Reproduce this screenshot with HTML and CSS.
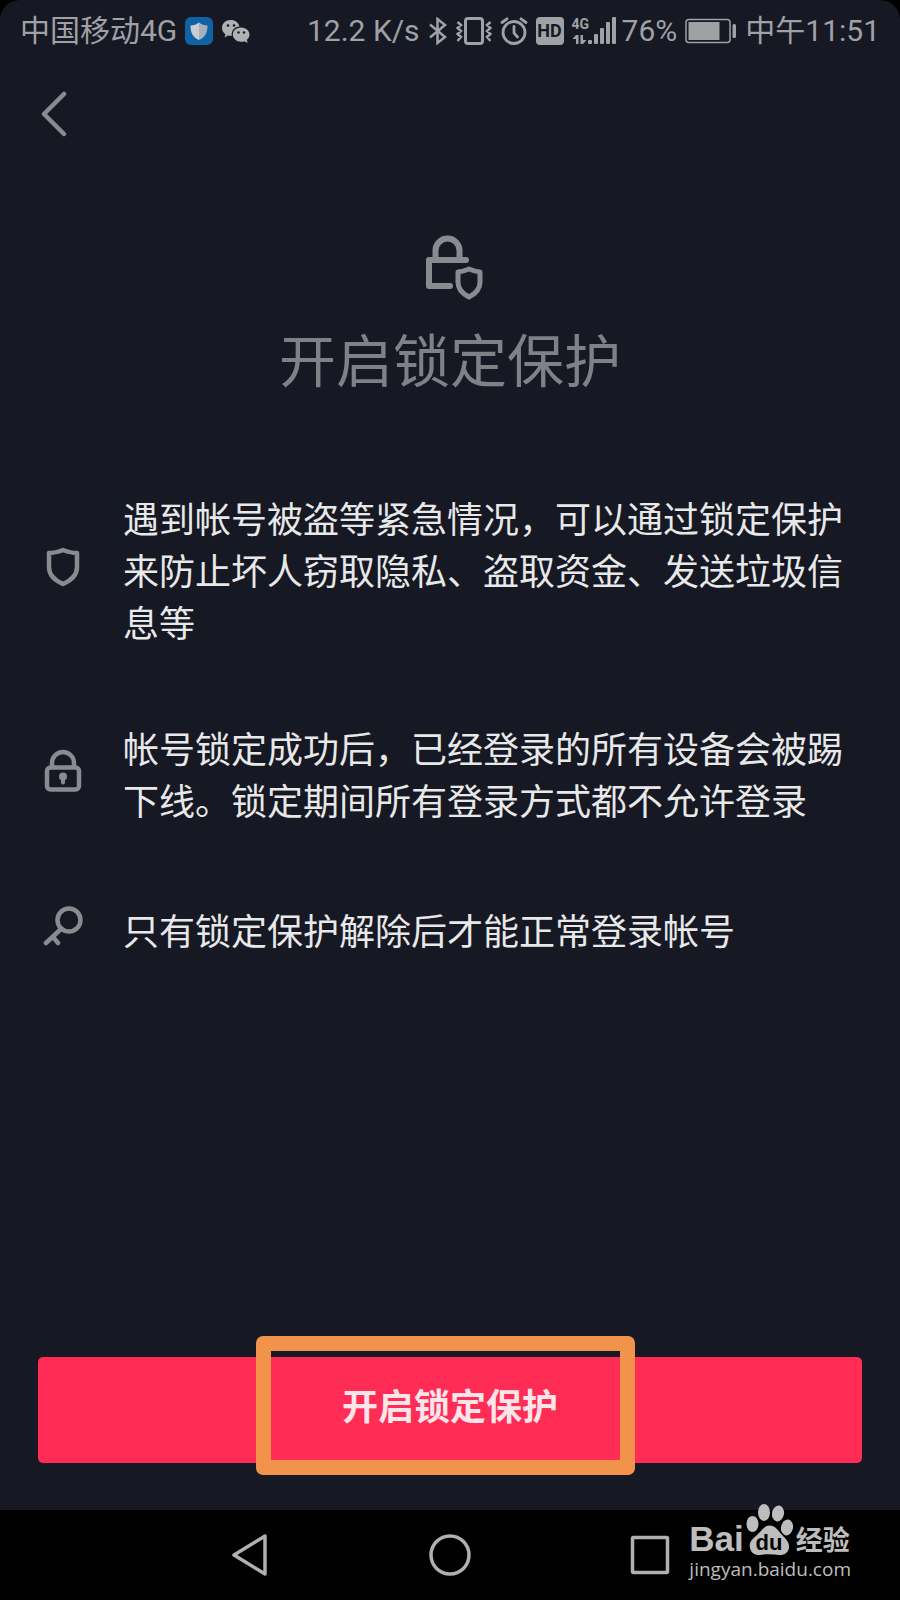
FILE: index.html
```html
<!DOCTYPE html>
<html lang="zh-CN">
<head>
    <meta charset="UTF-8">
    <meta name="viewport" content="width=device-width, initial-scale=1.0">
    <title>开启锁定保护</title>
    <link rel="stylesheet" href="styles.css">
</head>
<body>

    <div class="screen">
        <!-- Status bar -->
        <div class="status-bar">
            <div class="status-left">
                <span>中国移动4G</span>
                <svg width="28" height="28" viewBox="0 0 28 28">
                    <rect width="28" height="28" rx="6" fill="#0f62a3"/>
                    <path d="M14 5.500C11.500 7.500 9 8.200 5.500 8.500C5.500 16 8 20.500 14 23Z" fill="#c8cdd2"/>
                    <path d="M14 5.500C16.500 7.500 19 8.200 22.500 8.500C22.500 16 20 20.500 14 23Z" fill="#a5b0bb"/>
                </svg>
                <svg width="30" height="28" viewBox="0 0 30 28">
                    <path d="M10 3C4.500 3 1 6.500 1 11C1 13.600 2.300 15.800 4.500 17.200L3.500 20.500L7.200 18.600C8.500 19 9.500 19 10.700 19C10 13.500 14 9.500 18.500 9.500C17.500 5.500 14 3 10 3Z" fill="#b0b1b4"/>
                    <path d="M20 10.500C15.500 10.500 11.800 13.600 11.800 17.600C11.800 21.600 15.500 24.800 20 24.800C21.200 24.800 22.300 24.600 23.400 24.200L26.700 26L25.800 22.800C27.500 21.500 28.500 19.700 28.500 17.600C28.500 13.600 24.600 10.500 20 10.500Z" fill="#b0b1b4"/>
                    <g fill="#161823">
                        <circle cx="7" cy="8.500" r="1.300"/>
                        <circle cx="13" cy="8.500" r="1.300"/>
                        <circle cx="17.500" cy="15.500" r="1.200"/>
                        <circle cx="23" cy="15.500" r="1.200"/>
                    </g>
                </svg>
            </div>
            <div class="status-right">
                <span>12.2 K/s</span>
                <!-- bluetooth -->
                <svg width="20" height="28" viewBox="0 0 20 28" fill="none" stroke="#a0a1a5" stroke-width="2.500">
                    <path d="M2 7.500L17 20L9.500 26V2L17 8L2 20.500"/>
                </svg>
                <!-- vibrate -->
                <svg width="36" height="28" viewBox="0 0 36 28" fill="none" stroke="#a0a1a5" stroke-width="2.500">
                    <rect x="9.500" y="1.500" width="17" height="25" rx="2.500" stroke-width="3"/>
                    <path d="M1.500 5L5 8L1.500 11L5 14L1.500 17L5 20L1.500 24M34.500 5L31 8L34.500 11L31 14L34.500 17L31 20L34.500 24"/>
                </svg>
                <!-- alarm -->
                <svg width="28" height="28" viewBox="0 0 28 28" fill="none" stroke="#a0a1a5" stroke-width="2.800" stroke-linecap="round">
                    <circle cx="14" cy="15.500" r="11"/>
                    <path d="M14 9.500V16L17.500 20M2 5.500L7 1.800M26 5.500L21 1.800"/>
                </svg>
                <span class="hd">HD</span>
                <span class="network">
                    <span class="network-type">4G</span>
                    <svg width="46" height="28" viewBox="0 0 46 28" fill="#a0a1a5">
                        <path d="M4 18H6.500V27H4V22H0.500ZM8.500 18H11V23H14.500L11 27H8.500Z"/>
                        <rect x="16" y="23" width="4" height="4" rx="1"/>
                        <rect x="22" y="17" width="4" height="10" rx="1"/>
                        <rect x="28" y="11" width="4" height="16" rx="1"/>
                        <rect x="34" y="5" width="4" height="22" rx="1"/>
                        <rect x="40" y="0" width="4" height="27" rx="1"/>
                    </svg>
                </span>
                <span>76%</span>
                <!-- battery -->
                <svg width="52" height="26" viewBox="0 0 52 26">
                    <rect x="1" y="1.500" width="44" height="23" rx="3" fill="none" stroke="#a0a1a5" stroke-width="1.500"/>
                    <rect x="3.500" y="4" width="31" height="18" fill="#a0a1a5"/>
                    <rect x="47.500" y="6" width="3.500" height="14" rx="1.500" fill="#a0a1a5"/>
                </svg>
                <span>中午11:51</span>
            </div>
        </div>

        <header class="top-bar">
            <button class="back" type="button" aria-label="返回">
                <svg width="26" height="46" viewBox="0 0 26 46" fill="none" stroke="#8a8b91" stroke-width="4.500" stroke-linecap="round" stroke-linejoin="round">
                    <path d="M23 3L3 23L23 43"/>
                </svg>
            </button>
        </header>

        <main class="content">
            <div class="hero">
                <svg width="58" height="66" viewBox="0 0 58 66" fill="none" stroke="#8a8b91" stroke-width="6" stroke-linecap="round" stroke-linejoin="round">
                    <path d="M10.500 24V15.500A12 12 0 0 1 34.500 15.500V24"/>
                    <path d="M41 25H4V51H25"/>
                    <path d="M44 34Q38 36.500 33 37V47Q33 56.500 44 62Q55 56.500 55 47V37Q50 36.500 44 34Z" stroke-width="5"/>
                </svg>
                <h1>开启锁定保护</h1>
            </div>

            <ul class="notes">
                <li>
                    <svg width="40" height="44" viewBox="0 0 40 44" fill="none" stroke="#8a8b91" stroke-width="4.500" stroke-linejoin="round">
                        <path d="M20 5Q12 8 6 8V22Q6 33 20 39Q34 33 34 22V8Q28 8 20 5Z"/>
                    </svg>
                    <p>遇到帐号被盗等紧急情况，可以通过锁定保护来防止坏人窃取隐私、盗取资金、发送垃圾信息等</p>
                </li>
                <li>
                    <svg width="40" height="44" viewBox="0 0 40 44" fill="none" stroke="#8a8b91" stroke-width="4.500">
                        <path d="M9 18V14A11 11 0 0 1 31 14V18"/>
                        <rect x="4" y="18.500" width="32" height="22" rx="3.500"/>
                        <circle cx="20" cy="27.500" r="4" fill="#8a8b91" stroke="none"/>
                        <path d="M20 28V33.500" stroke-width="4" stroke-linecap="round"/>
                    </svg>
                    <p>帐号锁定成功后，已经登录的所有设备会被踢下线。锁定期间所有登录方式都不允许登录</p>
                </li>
                <li>
                    <svg width="40" height="44" viewBox="0 0 40 44" fill="none" stroke="#8a8b91" stroke-width="4.500" stroke-linecap="round">
                        <circle cx="26" cy="15" r="11.500"/>
                        <path d="M18 24L3 38M10 32L15 38"/>
                    </svg>
                    <p>只有锁定保护解除后才能正常登录帐号</p>
                </li>
            </ul>
        </main>

        <div class="action">
            <button class="primary" type="button">开启锁定保护</button>
            <div class="highlight"></div>
        </div>
    </div>

    <!-- System navigation -->
    <nav class="nav-bar">
        <button type="button" aria-label="返回">
            <svg width="42" height="44" viewBox="0 0 42 44" fill="none" stroke="#b0b0b0" stroke-width="3.500" stroke-linejoin="round">
                <path d="M36 3V41L5 22Z"/>
            </svg>
        </button>
        <button type="button" aria-label="主屏幕">
            <svg width="44" height="44" viewBox="0 0 44 44" fill="none" stroke="#b0b0b0" stroke-width="3.500">
                <circle cx="22" cy="22" r="19"/>
            </svg>
        </button>
        <button type="button" aria-label="最近任务">
            <svg width="44" height="44" viewBox="0 0 44 44" fill="none" stroke="#b0b0b0" stroke-width="3.500" stroke-linejoin="round">
                <rect x="4.500" y="4.500" width="35" height="35" rx="1"/>
            </svg>
        </button>

        <div class="watermark">
            <div class="brand">
                <span class="brand-bai">Bai</span>
                <svg width="48" height="52" viewBox="0 0 48 52" fill="#bdbdbd">
                    <ellipse cx="6.500" cy="20" rx="6" ry="8"/>
                    <ellipse cx="18" cy="8.500" rx="6" ry="8.500"/>
                    <ellipse cx="32" cy="9.500" rx="6" ry="8" transform="rotate(10 32 9.500)"/>
                    <ellipse cx="41" cy="23.500" rx="6" ry="8" transform="rotate(10 41 23.500)"/>
                    <path d="M23.500 21.500C18 21.500 16 27 11 31C5 36 3 39 4 44C5 49 9 51.500 14 51C19 50 27 50 33 51C38 51.500 42 49 43 44C43.500 39 41 36 37 32C32 27 30 21.500 23.500 21.500Z"/>
                    <text class="brand-du" x="23" y="46" text-anchor="middle">du</text>
                </svg>
                <span class="brand-cn">经验</span>
            </div>
            <div class="site">jingyan.baidu.com</div>
        </div>
    </nav>

</body>
</html>
```
FILE: styles.css
```css
* {
    box-sizing: border-box;
}
body {
    margin: 0;
    min-height: 100vh;
    display: flex;
    flex-direction: column;
    background: #000;
    color: #e8e8e9;
    font-family: Roboto, "Noto Sans CJK SC", sans-serif;
}
button {
    padding: 0;
    border: 0;
    background: none;
    font-family: inherit;
}
svg {
    display: block;
    flex: none;
}
.screen {
    flex: 1;
    display: flex;
    flex-direction: column;
    background: #161823;
    border-radius: 20px 20px 0 0;
}

/* status bar */
.status-bar {
    display: flex;
    justify-content: space-between;
    align-items: center;
    height: 62px;
    padding: 0 20px;
    color: #a0a1a5;
    font-size: 30px;
    line-height: 36px;
    white-space: nowrap;
}
.status-left,
.status-right {
    display: flex;
    align-items: center;
    gap: 8px;
}
.hd {
    width: 28px;
    height: 28px;
    border-radius: 4px;
    background: #a0a1a5;
    color: #161823;
    font-size: 18px;
    font-weight: bold;
    line-height: 28px;
    text-align: center;
}
.network {
    position: relative;
    margin-right: -4px;
}
.network-type {
    position: absolute;
    top: 0;
    left: 0;
    font-size: 14px;
    font-weight: bold;
    line-height: 14px;
}

/* page */
.top-bar {
    display: flex;
    align-items: center;
    height: 104px;
    padding: 0 41px;
}
.hero {
    display: flex;
    flex-direction: column;
    align-items: center;
    padding-top: 69px;
}
.hero svg {
    margin-left: 8px;
}
h1 {
    margin: 22px 0 0;
    color: #808187;
    font-size: 57px;
    font-weight: normal;
    line-height: 80px;
}
.notes {
    display: flex;
    flex-direction: column;
    gap: 74px;
    margin: 92px 0 0;
    padding: 0 50px 0 43px;
    list-style: none;
}
.notes li {
    display: flex;
    align-items: center;
    gap: 40px;
    min-height: 60px;
}
.notes li svg {
    margin-bottom: 12px;
}
.notes p {
    margin: 0;
    font-size: 36px;
    line-height: 52px;
}
.action {
    position: relative;
    margin: auto 38px 47px;
}
.primary {
    display: block;
    width: 100%;
    height: 106px;
    padding-bottom: 12px;
    border-radius: 5px;
    background: #ff2c55;
    color: #ffe5ea;
    font-size: 36px;
    font-weight: bold;
}
.highlight {
    position: absolute;
    top: -21px;
    right: 227px;
    bottom: -12px;
    left: 218px;
    border: 15px solid #f2934b;
    border-radius: 7px;
    pointer-events: none;
}

/* bottom navigation */
.nav-bar {
    position: relative;
    display: flex;
    height: 90px;
    padding: 0 150px;
}
.nav-bar button {
    flex: 1;
    display: flex;
    justify-content: center;
    align-items: center;
}
.watermark {
    position: absolute;
    right: 49px;
    bottom: 18px;
    color: #bdbdbd;
}
.brand {
    display: flex;
    align-items: flex-end;
    gap: 2px;
}
.brand-bai {
    font-family: "Liberation Sans", sans-serif;
    font-size: 35px;
    font-weight: bold;
    line-height: 34px;
}
.brand-du {
    fill: #000;
    font-family: "Liberation Sans", sans-serif;
    font-size: 22px;
    font-weight: bold;
}
.brand-cn {
    font-size: 27px;
    font-weight: bold;
    line-height: 30px;
}
.site {
    font-family: "Open Sans", sans-serif;
    font-size: 19px;
    line-height: 26px;
}
```
